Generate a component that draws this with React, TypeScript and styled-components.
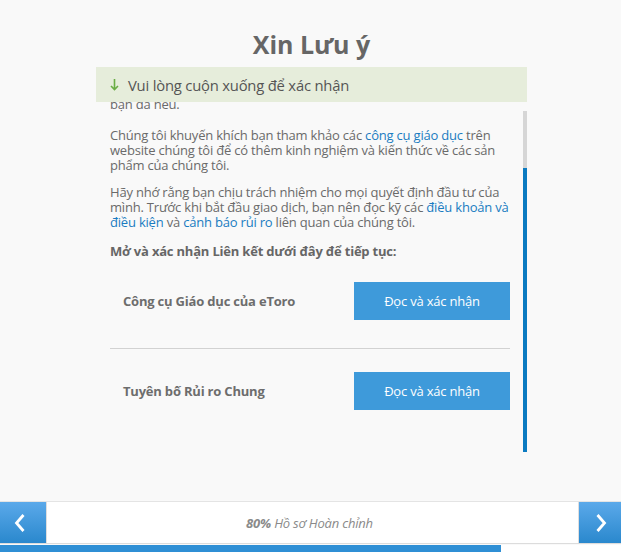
import React from 'react';
import styled, { createGlobalStyle } from 'styled-components';

const GlobalStyle = createGlobalStyle`
  html, body {
    margin: 0;
    padding: 0;
    background: #f9f9f9;
  }
  body {
    font-family: "Open Sans", "Noto Sans", sans-serif;
    letter-spacing: -0.2px;
  }
`;

const links = [
  { id: 1, label: 'Công cụ Giáo dục của eToro' },
  { id: 2, label: 'Tuyên bố Rủi ro Chung' },
];

const progress = 80.7;

export default function App() {
  return (
    <Page>
      <GlobalStyle />
      <Main>
        <Title>Xin Lưu ý</Title>
        <Banner>
          <svg width="9" height="13" viewBox="0 0 9 13">
            <path d="M4.5 1 V11.5 M1 8 L4.5 11.5 L8 8" fill="none" stroke="#6aad45" strokeWidth="1.6" />
          </svg>
          <span>Vui lòng cuộn xuống để xác nhận</span>
        </Banner>
        <ScrollArea>
          <Viewport>
            <Inner>
              <Para $clipped>bạn đã nêu.</Para>
              <Para>
                Chúng tôi khuyến khích bạn tham khảo các <Link>công cụ giáo dục</Link> trên
                <br />
                website chúng tôi để có thêm kinh nghiệm và kiến thức về các sản
                <br />
                phẩm của chúng tôi.
              </Para>
              <Para>
                Hãy nhớ rằng bạn chịu trách nhiệm cho mọi quyết định đầu tư của
                <br />
                mình. Trước khi bắt đầu giao dịch, bạn nên đọc kỹ các <Link>điều khoản và
                <br />
                điều kiện</Link> và <Link>cảnh báo rủi ro</Link> liên quan của chúng tôi.
              </Para>
              <Lead>Mở và xác nhận Liên kết dưới đây để tiếp tục:</Lead>
              {links.map((item) => (
                <Row key={item.id}>
                  <RowLabel>{item.label}</RowLabel>
                  <ConfirmButton>Đọc và xác nhận</ConfirmButton>
                </Row>
              ))}
            </Inner>
          </Viewport>
          <Scrollbar>
            <Track />
            <Thumb />
          </Scrollbar>
        </ScrollArea>
      </Main>
      <Footer>
        <Nav>
          <NavButton $width={46} $shift={-3}>
            <svg width="12" height="20" viewBox="0 0 12 20">
              <path d="M9.5 2 L2.5 10 L9.5 18" fill="none" stroke="#fff" strokeWidth="2.8" />
            </svg>
          </NavButton>
          <Status>
            <b>80%</b>&nbsp;Hồ sơ Hoàn chỉnh
          </Status>
          <NavButton $width={42} $shift={1}>
            <svg width="12" height="20" viewBox="0 0 12 20">
              <path d="M2.5 2 L9.5 10 L2.5 18" fill="none" stroke="#fff" strokeWidth="2.8" />
            </svg>
          </NavButton>
        </Nav>
        <ProgressTrack>
          <ProgressFill style={{ width: `${progress}%` }} />
        </ProgressTrack>
      </Footer>
    </Page>
  );
}

const Page = styled.div`
  display: flex;
  flex-direction: column;
  height: 552px;
  overflow: hidden;
`;

const Main = styled.div`
  flex: 1;
  width: 431px;
  margin-left: 96px;
  padding-top: 28px;
  box-sizing: border-box;
`;

const Title = styled.h1`
  margin: 0 0 7px;
  font-size: 25px;
  line-height: 32px;
  font-weight: 700;
  color: #666;
  text-align: center;
  letter-spacing: 0;
`;

const Banner = styled.div`
  display: flex;
  align-items: center;
  gap: 9px;
  height: 35px;
  padding: 0 14px;
  background: #e6eddb;
  color: #555;
  font-size: 14.8px;
`;

const ScrollArea = styled.div`
  display: flex;
  height: 350px;
`;

const Viewport = styled.div`
  flex: 1;
  overflow: hidden;
  padding: 0 13px 0 14px;
`;

const Inner = styled.div`
  margin-top: -5px;
`;

const Para = styled.p<{ $clipped?: boolean }>`
  margin: 0 0 ${(p) => (p.$clipped ? 16 : 12)}px;
  font-size: 13px;
  line-height: 15px;
  color: #6a6a6a;
  white-space: nowrap;
`;

const Link = styled.a`
  color: #1a7cc1;
  text-decoration: none;
`;

const Lead = styled.p`
  margin: 14px 0 0;
  font-size: 13px;
  line-height: 15px;
  font-weight: 700;
  color: #666;
`;

const Row = styled.div`
  display: flex;
  align-items: center;
  justify-content: space-between;
  padding: 23px 0 28px 13px;

  & + & {
    border-top: 1px solid #d2d2d2;
  }
`;

const RowLabel = styled.span`
  font-size: 13px;
  font-weight: 700;
  color: #6d6d6d;
`;

const ConfirmButton = styled.button`
  width: 156px;
  height: 38px;
  padding: 0;
  border: none;
  background: #3e9ada;
  color: #fff;
  font-family: inherit;
  font-size: 13px;
  letter-spacing: -0.2px;
`;

const Scrollbar = styled.div`
  display: flex;
  flex-direction: column;
  width: 4px;
  margin-top: 9px;
`;

const Track = styled.div`
  height: 57px;
  background: #d6d6d6;
`;

const Thumb = styled.div`
  flex: 1;
  background: #0b7bc1;
`;

const Footer = styled.div`
  border-top: 1px solid #e4e4e4;
`;

const Nav = styled.div`
  display: flex;
  height: 41px;
  background: #fff;
  border-bottom: 1px solid #dcdcdc;
`;

const NavButton = styled.div<{ $width: number; $shift: number }>`
  width: ${(p) => p.$width}px;
  display: flex;
  align-items: center;
  justify-content: center;
  padding-left: ${(p) => Math.max(p.$shift, 0) * 2}px;
  padding-right: ${(p) => Math.max(-p.$shift, 0) * 2}px;
  box-sizing: border-box;
  background: linear-gradient(#5ba9ea, #2a88cd);
`;

const Status = styled.div`
  flex: 1;
  display: flex;
  align-items: center;
  justify-content: center;
  padding-right: 6px;
  border-left: 1px solid #dedede;
  border-right: 1px solid #dedede;
  font-size: 13px;
  font-style: italic;
  color: #8a8a8a;

  b {
    font-weight: 700;
  }
`;

const ProgressTrack = styled.div`
  height: 7px;
  margin-top: 1px;
  background: #fff;
`;

const ProgressFill = styled.div`
  height: 100%;
  background: #2f8fd5;
`;
